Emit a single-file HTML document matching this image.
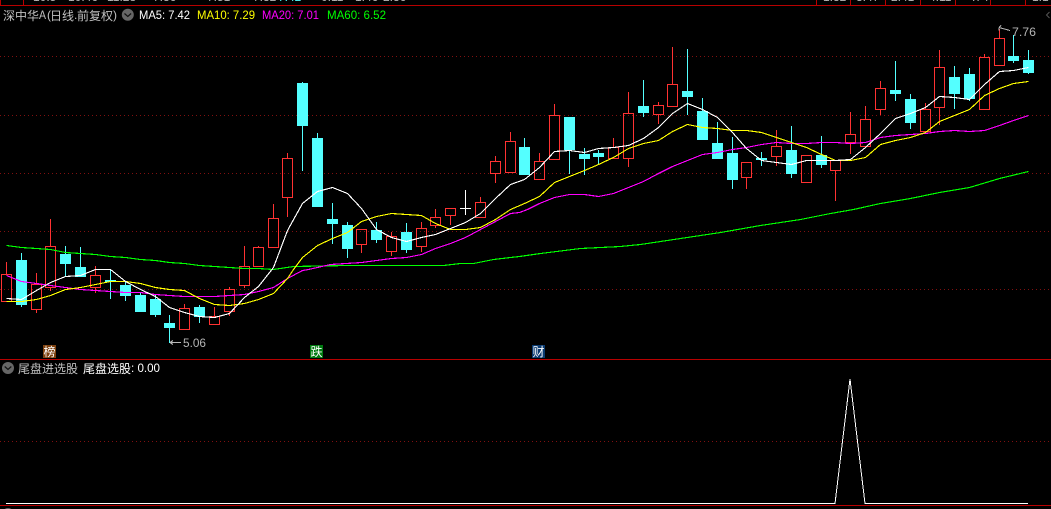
<!DOCTYPE html>
<html><head><meta charset="utf-8"><style>
html,body{margin:0;padding:0;background:#000;width:1051px;height:509px;overflow:hidden}
svg{display:block}
text{font-family:"Liberation Sans","WenQuanYi Zen Hei","Noto Sans CJK SC",sans-serif;font-size:12px}
</style></head><body>
<svg width="1051" height="509" viewBox="0 0 1051 509" xmlns="http://www.w3.org/2000/svg">
<rect width="1051" height="509" fill="#000"/>
<g fill="#b8b8b8">
<text x="33" y="1">10.5</text><text x="68" y="1">10:46</text><text x="107" y="1">11:28</text><text x="153" y="1">7.36</text><text x="207" y="1">7.51</text><text x="253" y="1">7.32</text>
<text x="278" y="1" fill="#54ffff">7.42</text><text x="317" y="1">-0.11</text><text x="355" y="1">1.46</text><text x="383" y="1">2.36</text>
<text x="823" y="1">1.32</text><text x="856" y="1">3.47</text><text x="891" y="1">2.41</text><text x="929" y="1">4.11</text><text x="972" y="1">.74</text><text x="1032" y="1">1.1</text>
</g>
<g shape-rendering="crispEdges">
<path d="M0 5.5H1051M0 359.5H1051M0 505.5H1051M23.5 0V5M0.5 0V5M816.5 0V5M850.5 0V5M885.5 0V5M920.5 0V5M955.5 0V5M990.5 0V5M1025.5 0V5" stroke="#b80000" fill="none"/>
<path d="M0 56.5H1051M0 115.5H1051M0 173.5H1051M0 231.5H1051M0 289.5H1051M0 441.5H1051" stroke="#801010" stroke-dasharray="1 3" fill="none"/>

<path fill="none" stroke="#54ffff" d="M21.5 253V307M65.5 246V276M80.5 247V277M110.5 269V299M125.5 282V301M140.5 293V312M155.5 294V317M169.5 315V343M199.5 305V323M302.5 82V171M317.5 133V207M332.5 203V244M347.5 222V258M376.5 222V243M406.5 223V253M524.5 138V175M569.5 117V174M584.5 148V175M598.5 150V164M643.5 80V117M687.5 49V115M702.5 98V140M717.5 122V159M732.5 137V189M761.5 152V166M791.5 126V178M821.5 136V168M895.5 61V101M910.5 94V129M954.5 66V109M969.5 68V101M1013.5 35V63M1028.5 50V74"/>
<path fill="#54ffff" d="M16 260h11v45h-11zM60 254h11v10h-11zM75 267h11v10h-11zM105 280h11v2h-11zM120 285h11v11h-11zM135 295h11v17h-11zM150 299h11v16h-11zM164 323h11v5h-11zM194 307h11v10h-11zM297 83h11v43h-11zM312 138h11v69h-11zM327 219h11v5h-11zM342 225h11v24h-11zM371 230h11v10h-11zM401 232h11v18h-11zM519 147h11v28h-11zM564 117h11v33h-11zM579 154h11v5h-11zM593 153h11v4h-11zM638 106h11v7h-11zM682 91h11v6h-11zM697 111h11v29h-11zM712 143h11v16h-11zM727 153h11v27h-11zM756 158h11v2h-11zM786 150h11v24h-11zM816 155h11v10h-11zM890 90h11v4h-11zM905 99h11v24h-11zM949 77h11v17h-11zM964 74h11v25h-11zM1008 56h11v5h-11zM1023 60h11v13h-11z"/>
<path fill="none" stroke="#ff3232" d="M6.5 262V274M1.5 274.5h10v27h-10zM36.5 273V284M31.5 284.5h10v25h-10zM36.5 310V313M50.5 219V246M45.5 246.5h10v41h-10zM50.5 288V291M95.5 266V275M90.5 275.5h10v12h-10zM95.5 288V293M184.5 304V308M179.5 308.5h10v21h-10zM214.5 307V316M209.5 316.5h10v8h-10zM229.5 287V289M224.5 289.5h10v22h-10zM229.5 312V316M244.5 246V266M239.5 266.5h10v19h-10zM244.5 286V288M258.5 246V247M253.5 247.5h10v19h-10zM273.5 204V218M268.5 218.5h10v29h-10zM287.5 153V158M282.5 158.5h10v39h-10zM287.5 198V217M356.5 229.5h10v15h-10zM361.5 245V253M391.5 232V236M386.5 236.5h10v15h-10zM391.5 252V256M421.5 222V228M416.5 228.5h10v18h-10zM421.5 247V252M435.5 209V217M430.5 217.5h10v8h-10zM435.5 226V228M445.5 208.5h10v7h-10zM450.5 216V225M480.5 197V202M475.5 202.5h10v15h-10zM495.5 156V161M490.5 161.5h10v12h-10zM495.5 174V183M510.5 132V141M505.5 141.5h10v31h-10zM539.5 153V161M534.5 161.5h10v18h-10zM554.5 104V115M549.5 115.5h10v44h-10zM613.5 138V147M608.5 147.5h10v11h-10zM628.5 92V113M623.5 113.5h10v45h-10zM628.5 159V167M658.5 102V105M653.5 105.5h10v9h-10zM658.5 115V124M672.5 47V84M667.5 84.5h10v22h-10zM741.5 162.5h10v15h-10zM746.5 178V189M776.5 130V146M771.5 146.5h10v10h-10zM776.5 157V166M801.5 155.5h10v27h-10zM830.5 160.5h10v10h-10zM835.5 171V201M850.5 112V134M845.5 134.5h10v8h-10zM850.5 143V154M865.5 106V119M860.5 119.5h10v27h-10zM880.5 81V88M875.5 88.5h10v21h-10zM880.5 110V115M925.5 103V109M920.5 109.5h10v22h-10zM939.5 50V67M934.5 67.5h10v40h-10zM939.5 108V125M984.5 54V57M979.5 57.5h10v52h-10zM999.5 29V38M994.5 38.5h10v27h-10z"/>
<path fill="none" stroke="#fff" d="M465.5 190V215M460 208.5H471"/>

<g transform="translate(.5 .5)" stroke-width="1.15" fill="none">
<polyline stroke="#00ff00" points="6,245 21,247 36,248 50,249 65,252 80,253 95,254 110,256 125,257 140,259 155,260 169,262 184,263 199,265 214,266 229,267 244,268 258,268 273,269 293,266 347,265 443,265 460,263 473,263 483,261 493,259 510,257 519,256 540,253 580,248 620,246 640,244 680,238 720,232 760,225 800,219 830,213 853,209 880,203 910,198 939,192 969,187 999,178 1028,171"/>
<polyline stroke="#ff00ff" points="6,275 21,281 36,283 50,285 65,287 80,289 95,290 110,291 125,292 140,292 155,294 169,295 184,296 199,296 214,296 229,295 244,294 258,291 273,287 287,278 302,270 308,269 330,264 361,262 376,260 391,258 406,257 421,254 435,248 450,243 465,237 480,229 495,221 510,213 519,212 527,209 539,203 554,197 569,194 584,194 598,196 613,193 628,187 643,181 658,173 672,166 687,160 702,154 717,152 732,149 746,147 761,144 776,142 791,143 806,143 821,142 835,142 850,143 865,142 880,137 895,135 910,134 925,133 939,131 954,130 969,131 984,130 999,125 1013,120 1028,115"/>
<polyline stroke="#ffff00" points="6,301 21,301 36,299 50,295 65,289 80,287 95,284 110,281 125,281 140,283 155,287 169,289 184,290 199,298 214,304 229,305 244,303 258,299 273,293 287,278 293,269 302,257 317,245 332,238 347,232 361,221 376,216 391,213 406,214 421,215 435,223 450,229 465,229 480,227 495,219 510,209 524,203 539,196 554,182 569,176 584,170 598,164 613,157 628,148 643,143 658,140 672,131 687,124 702,127 717,128 732,130 746,130 761,132 776,137 791,142 806,147 821,154 835,160 850,160 865,157 880,144 895,140 910,137 925,132 939,121 954,115 969,109 984,95 999,88 1013,83 1028,81"/>
<polyline stroke="#fff" points="6,298 21,299 36,290 50,282 65,276 80,275 95,269 110,269 125,281 140,289 155,296 169,307 184,312 199,316 214,317 229,313 244,297 258,286 273,267 287,230 302,203 317,191 332,187 347,193 361,208 376,229 391,237 406,241 421,237 435,234 450,228 465,222 480,213 495,198 510,184 524,179 539,167 554,151 569,150 584,152 598,148 613,147 628,145 643,138 658,127 672,113 687,103 702,109 717,117 732,132 746,148 761,160 776,162 791,164 806,160 821,160 835,160 850,159 865,147 880,133 895,118 910,113 925,107 939,96 954,97 969,99 984,84 999,71 1013,70 1028,67"/>
</g>

<polyline fill="none" stroke="#fff" points="6,503.5 835,503.5 850,379 865,503.5 1028,503.5"/>

<path fill="none" stroke="#b8b8b8" d="M170 342.5H181M170 342.5l3 -2M170 342.5l3 2M999 27.5L1010 30.5M999 27.5l2 -2M999 27.5v3"/>
<rect x="43" y="345" width="13" height="13" fill="#7f4210"/>
<rect x="310" y="345" width="13" height="13" fill="#007a10"/>
<rect x="532" y="345" width="13" height="13" fill="#0a3a70"/>
</g>

<text x="183" y="347" fill="#b4b4b4" textLength="23" lengthAdjust="spacingAndGlyphs">5.06</text>
<text x="1012" y="36" fill="#b4b4b4" textLength="24" lengthAdjust="spacingAndGlyphs">7.76</text>

<text x="43.5" y="356" fill="#fff">榜</text>
<text x="310.5" y="356" fill="#fff">跌</text>
<text x="532.5" y="356" fill="#fff">财</text>

<text x="3" y="20" fill="#c0c0c0">深中华</text>
<text x="39" y="19" fill="#c0c0c0" textLength="7" lengthAdjust="spacingAndGlyphs">A</text>
<text x="47" y="19" fill="#c0c0c0">(</text>
<text x="50" y="20" fill="#c0c0c0">日线</text>
<text x="74" y="19" fill="#c0c0c0">.</text>
<text x="77" y="20" fill="#c0c0c0">前复权</text>
<text x="113" y="19" fill="#c0c0c0">)</text>

<circle cx="127.8" cy="14.8" r="6" fill="#666"/>
<path d="M124.5 13.5l3.3 3 3.3-3" fill="none" stroke="#111" stroke-width="1.2"/>

<text x="139" y="19" fill="#fff" textLength="51" lengthAdjust="spacingAndGlyphs">MA5: 7.42</text>
<text x="197" y="19" fill="#ffff00" textLength="58" lengthAdjust="spacingAndGlyphs">MA10: 7.29</text>
<text x="262" y="19" fill="#ff00ff" textLength="57" lengthAdjust="spacingAndGlyphs">MA20: 7.01</text>
<text x="327" y="19" fill="#00ff00" textLength="59" lengthAdjust="spacingAndGlyphs">MA60: 6.52</text>

<path d="M1049.5 12l-3 3 3 3" fill="none" stroke="#555"/>

<circle cx="8" cy="368" r="6" fill="#666"/>
<path d="M4.7 366.5l3.3 3 3.3-3" fill="none" stroke="#111" stroke-width="1.2"/>
<text x="18" y="373" fill="#c0c0c0">尾盘进选股</text>
<text x="83" y="373" fill="#fff">尾盘选股</text>
<text x="131" y="372" fill="#fff" textLength="29" lengthAdjust="spacingAndGlyphs">: 0.00</text>
<circle cx="8" cy="514" r="6" fill="#666"/>
</svg>
</body></html>
